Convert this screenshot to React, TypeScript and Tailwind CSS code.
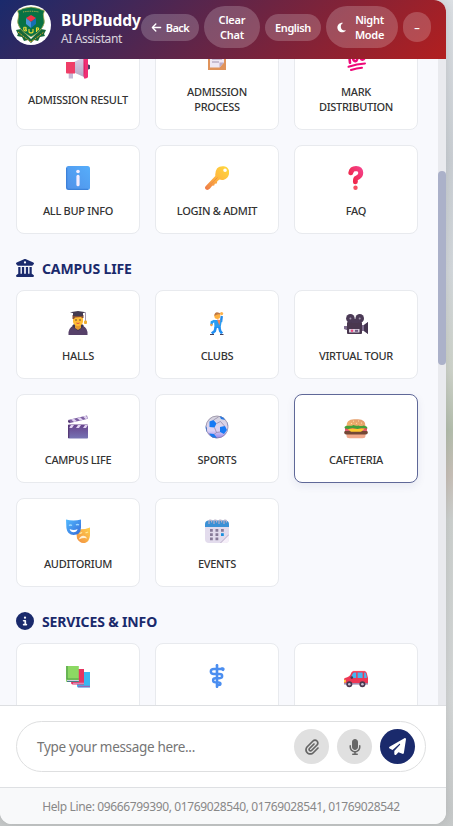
import type { ReactNode } from "react";
import {
  FaArrowLeft,
  FaBuildingColumns,
  FaCircleInfo,
  FaMicrophone,
  FaMoon,
  FaPaperclip,
  FaPaperPlane,
} from "react-icons/fa6";

function Icon({ children }: { children: ReactNode }) {
  return (
    <svg viewBox="0 0 24 24" className="h-6 w-6 shrink-0">
      {children}
    </svg>
  );
}

const Megaphone = () => (
  <Icon>
    <defs>
      <linearGradient id="mg" x1="0" x2="0" y1="0" y2="1">
        <stop offset="0" stopColor="#d9cfe6" />
        <stop offset="1" stopColor="#b5a9c6" />
      </linearGradient>
    </defs>
    <path d="M22 9.5a2.3 2.3 0 0 1 0 5z" fill="#4a3d63" />
    <rect x="2.7" y="16" width="4.3" height="7.5" fill="#c5b8d5" />
    <path d="M8 7 18 2v20L8 17.5z" fill="url(#mg)" />
    <path d="M0 7h9v11.5H1q-1 0-1-1z" fill="#ef3d67" />
    <path d="M18 1.5q4 0 4 2v18q0 2-4 2z" fill="#f02f74" />
    <path d="M17.5 2v21q2.5-10 0-21z" fill="#d91a62" />
  </Icon>
);

const Clipboard = () => (
  <Icon>
    <path d="M3 2h18v21H3z" fill="#e0935b" />
    <path d="M5 4h14v11.5L14.5 20.5H5z" fill="#eee7f4" />
    <path d="M7 9h10M7 12h10M7 15h7" stroke="#a192b0" strokeWidth="1" />
    <path d="M14.5 20.5v-5H19z" fill="#bbaac6" />
    <rect x="8" y="1" width="8" height="3" rx="1" fill="#9586a5" />
  </Icon>
);

const Hundred = () => (
  <Icon>
    <g fill="none" stroke="#ee0878" strokeLinecap="round" strokeWidth="2.6">
      <path d="M2.5 9 5 6.8l1 9" />
      <ellipse cx="11" cy="9.8" rx="2.3" ry="4.4" transform="rotate(-8 11 9.8)" />
      <ellipse cx="18.3" cy="8.2" rx="2.4" ry="4.4" transform="rotate(-8 18.3 8.2)" />
      <path d="M4.5 19.8Q13 16.8 21 16.4" strokeWidth="2" />
      <path d="M7 23Q13 20.9 18 20.7" strokeWidth="2" />
    </g>
  </Icon>
);

const InfoSquare = () => (
  <Icon>
    <defs>
      <linearGradient id="inf" x1="1" x2="0" y1="0" y2="1">
        <stop offset="0" stopColor="#56aefb" />
        <stop offset="1" stopColor="#5090e8" />
      </linearGradient>
    </defs>
    <rect width="24" height="24" rx="2.5" fill="url(#inf)" />
    <path d="M.7 2v19.2q0 2.1 2.1 2.1H22" fill="none" stroke="#397dd5" />
    <circle cx="12" cy="5.5" r="1.8" fill="#f4edff" />
    <rect x="10.4" y="8.8" width="3.2" height="11.5" rx="1.6" fill="#f4edff" />
  </Icon>
);

const KeyIcon = () => (
  <Icon>
    <defs>
      <linearGradient id="key" x1="1" x2="0" y1="0" y2="1">
        <stop offset="0" stopColor="#ffda3d" />
        <stop offset=".5" stopColor="#ffb83f" />
        <stop offset="1" stopColor="#ed7548" />
      </linearGradient>
    </defs>
    <path
      fill="url(#key)"
      fillRule="evenodd"
      d="M12 2.5C14 .4 17-.2 20 .5s4.8 4 4 7.5-3.4 6-7 6l-2.5-.4-2.2 1.7-.5 2.2-2 .3-.6 1.7-2 .3L5 22.6Q3 24.5 1 23.6q-1.8-1.5-.4-3.4L10.3 10Q9.9 5.5 12 2.5zM20 2.4a1.8 1.8 0 1 0 .1 3.6A1.8 1.8 0 0 0 20 2.4z"
    />
    <path d="m2.5 21.5 10-10" stroke="#ed9146" />
  </Icon>
);

const Question = () => (
  <Icon>
    <defs>
      <linearGradient id="qu" x1="1" x2="0" y1="0" y2="1">
        <stop offset="0" stopColor="#f43f86" />
        <stop offset="1" stopColor="#ee2440" />
      </linearGradient>
    </defs>
    <path
      d="M6.8 6.8Q7.6 2.5 12 2.5q4.6.2 4.8 4.4c.1 3.2-2.1 4.4-4.5 5.3q-1 .5-.9 3.6"
      fill="none"
      stroke="url(#qu)"
      strokeLinecap="round"
      strokeWidth="4.9"
    />
    <circle cx="11.5" cy="21.7" r="2.2" fill="#f65162" />
  </Icon>
);

const Graduate = () => (
  <Icon>
    <path d="M2.5 24q-.7-7 5.3-9.5h8.4q6 2.5 5.3 9.5z" fill="#564169" />
    <path d="m6 15 6 5 6-5-2-2H8z" fill="#40364f" />
    <path d="M9 12h6v5l-3 2-3-2z" fill="#e79b32" />
    <path d="M7 4h10v7q-1 4-5 4t-5-4z" fill="#ffbd35" />
    <path d="M6.5 4h11v3H16l-1-1-6 .5L8 8H6.5z" fill="#884f35" />
    <path d="M4 1.2 12 0l8 1.2-8 2.3zM7 2h10v3H7z" fill="#433a50" />
    <circle cx="10" cy="9" r=".8" fill="#603c31" />
    <circle cx="14" cy="9" r=".8" fill="#603c31" />
    <path d="M10.4 12q1.6 1 3.2 0" fill="none" stroke="#dc4f46" />
    <path d="M19.5 1.4v9" stroke="#a498b1" />
    <rect x="18" y="9.5" width="3" height="3.4" rx="1" fill="#efae31" />
  </Icon>
);

const Dancer = () => (
  <Icon>
    <path d="m16 11 .8-6" stroke="#248aeb" strokeWidth="2.4" />
    <circle cx="16.6" cy="2.6" r="1.6" fill="#ffb34c" />
    <path d="m9.5 10-2.7 1-.3 3" fill="none" stroke="#219cf5" strokeWidth="2.4" />
    <path d="M9 9h8l-1.5 8H9.5z" fill="#299cf1" />
    <path d="m12 8.5 3.4.5-1 5.5z" fill="#f78355" />
    <path d="m10.8 16-1 4-3 2.5M14.2 16l1 4 1.8 2.5" fill="none" stroke="#208df1" strokeWidth="2.6" />
    <path d="M5 23.5h4M15 23.5h3.5" stroke="#47435d" />
    <circle cx="12.3" cy="5" r="3" fill="#ffb13f" />
    <path d="M9.4 5q0-4 3.4-3.6 3 .5 2.3 2.1-1.8-.9-4 .5z" fill="#bd7847" />
    <circle cx="6.4" cy="14" r="1.2" fill="#f4a14e" />
  </Icon>
);

const Camera = () => (
  <Icon>
    <path d="M0 15h4v4H2.5L0 18zM17 14h3l4-3v12l-4-3h-3z" fill="#806e90" />
    <path d="m20 14 4-3v12l-4-3z" fill="#453550" />
    <rect x="3" y="11" width="15" height="12" rx="1" fill="#49374f" />
    <rect x="5" y="18" width="10.5" height="3.6" rx=".5" fill="#d9cddd" />
    <circle cx="8" cy="19.8" r="1.2" fill="#f0457e" />
    <path d="M11 19.8h3" stroke="#705a80" strokeWidth="2" />
    <circle cx="6.4" cy="7.4" r="4.3" fill="#4b3a56" />
    <circle cx="15.7" cy="7.4" r="4.3" fill="#4b3a56" />
    <path d="M8 8h6v4H8z" fill="#4b3a56" />
    <g fill="#a093ab">
      <circle cx="6.4" cy="7.4" r="1" />
      <circle cx="15.7" cy="7.4" r="1" />
    </g>
  </Icon>
);

const Clapper = () => (
  <Icon>
    <defs>
      <linearGradient id="cl" x1="0" x2="0" y1="0" y2="1">
        <stop offset="0" stopColor="#66428b" />
        <stop offset="1" stopColor="#7774b4" />
      </linearGradient>
    </defs>
    <rect x="2" y="9.5" width="20" height="14" rx=".8" fill="url(#cl)" />
    <path d="M2 5 21 .5l1 3.2-19 4.6z" fill="#7d60a1" />
    <path d="m5 4.5 3-.8 3 2.6-3 .8zM11 3l3-.8 3 2.6-3 .8zM17 1.5l3-.8 2 2.8-2.5.6zM5 10h3l-2 3H3zM12 10h3l-2 3h-3zM19 10h3l-2 3h-3z" fill="#e0d2f1" />
    <path d="M2.7 10v13" stroke="#563975" strokeWidth="1.3" />
    <circle cx="3" cy="6.5" r="1" fill="#4f3568" />
  </Icon>
);

const Soccer = () => (
  <Icon>
    <defs>
      <linearGradient id="soc" x1="0" x2="0" y1="0" y2="1">
        <stop offset="0" stopColor="#d4d4da" />
        <stop offset=".65" stopColor="#ddd3f6" />
        <stop offset="1" stopColor="#8f7ee6" />
      </linearGradient>
      <clipPath id="ball">
        <circle cx="12" cy="12" r="11.3" />
      </clipPath>
    </defs>
    <g clipPath="url(#ball)">
      <path d="M0 0h24v24H0z" fill="url(#soc)" />
      <path d="m4.5 6.5 4-1.5 3 3.5-2 4-5-.5zM15 12l5-1 2 4-3 4-4-2zM14 0l5 2 1 3-4-1zM0 10l2 3v5l-3-2zM4 18.5l5 .5 3 4-3 3zM22 5l3 4-2 2z" fill="#167af4" />
      <path d="m8.5 5 5-3m-2 6.5 4-2 4 4.5m-10 1.5 2 5-2.5 2m2.5-2 3.5-.5" fill="none" stroke="#8d82a3" strokeWidth=".7" />
    </g>
    <circle cx="12" cy="12" r="11" fill="none" stroke="#7f758f" strokeWidth=".6" />
  </Icon>
);

const Burger = () => (
  <Icon>
    <defs>
      <linearGradient id="bun" x1="0" x2="1" y1="1" y2="0">
        <stop offset="0" stopColor="#f7b76b" />
        <stop offset="1" stopColor="#df986f" />
      </linearGradient>
    </defs>
    <path d="M2.5 11.5Q2 4.5 10 4.3h4q8 .2 7.5 7.2z" fill="url(#bun)" />
    <path d="M2.5 18.5h19v2.2q0 2.5-3 2.5h-13q-3 0-3-2.5z" fill="#f0a98b" />
    <rect x=".2" y="15.6" width="23.6" height="4" rx="2" fill="#744735" />
    <path d="M1 13h22v2.8H1z" fill="#e84e65" />
    <path d="M3 13.5h18l-4 3.2H7z" fill="#ffc92e" />
    <path d="M1 13.5q-1.5-2 1.5-2.8 5.2.5 7-.7 2.5 1.3 5 .4 2.5 1.3 5 .1 4 .6 4 3l-6-.4-4 1-5-1-4 1z" fill="#449f3b" />
    <path d="M9 6.2h1m4-.2h1M7 8.5h1m4-.2h1m4-.2h1" stroke="#ffe1a7" />
  </Icon>
);

const Masks = () => (
  <Icon>
    <defs>
      <linearGradient id="blue" x1="0" x2="1" y1="0" y2="1">
        <stop stopColor="#52baff" />
        <stop offset="1" stopColor="#356bd9" />
      </linearGradient>
      <linearGradient id="gold" x1="0" x2="1" y1="1" y2="0">
        <stop stopColor="#f18c40" />
        <stop offset="1" stopColor="#ffd04c" />
      </linearGradient>
    </defs>
    <path d="M10 10q7 1.2 14-1.5v8q-.7 6.4-5 7.4-4.7.9-8-4.5z" fill="url(#gold)" />
    <path d="M0 .5q7.5 2 15 0v8q-.4 7-6 7.3Q1.5 16.6.4 9z" fill="url(#blue)" />
    <path d="M3 6.5q1.5-1 3 0m4-.5q1.5-1 3 0" fill="none" stroke="#a4dbff" strokeWidth="1.3" />
    <path d="M3.6 10q4.4 2 8 0-1 3.2-4 3.2t-4-3.2z" fill="#fff" />
    <path d="M13.5 14.5q2-.2 2.4-1.2m3.6.3q1.5.3 2.4-.8" fill="none" stroke="#ffe798" strokeWidth="1.3" />
    <path d="M12.8 20.5q1.5-3.7 4.4-3.7 2.9-.1 4 2.6-4-.9-8.4 1.1z" fill="#fff1d2" />
  </Icon>
);

const CalendarIcon = () => (
  <Icon>
    <rect y="1.5" width="24" height="22.5" rx="4" fill="#e3dced" />
    <path d="M4 1.5h16q4 0 4 4V8H0V5.5q0-4 4-4z" fill="#3b91d6" />
    <path d="m15.5 24 8.5-8.5V20q0 4-4 4z" fill="#f6eff9" />
    <path d="m15.5 24 8.5-8.5" stroke="#b6a9c4" />
    <g fill="#887b98">
      <path d="M5 10h2.8v2.8H5zM10.5 10h2.8v2.8h-2.8zM16 10h2.8v2.8H16zM5 14.2h2.8V17H5zM10.5 14.2h2.8V17h-2.8zM5 18.4h2.8v2.8H5zM10.5 18.4h2.8v2.8h-2.8z" />
      <path d="M16 14.2h2.8V17H16z" fill="#1990dd" />
    </g>
    <path d="M4 5V2Q4.5.4 6.2 1.3 7 2 6.5 3.5M9 5V2q.5-1.6 2.2-.7.8.7.3 2.2M14 5V2q.5-1.6 2.2-.7.8.7.3 2.2M19 5V2q.5-1.6 2-.7.8.7.3 2.2" stroke="#b9afc6" strokeWidth="1.2" fill="none" />
  </Icon>
);

const Books = () => (
  <Icon>
    <path d="M11 8h13v15.5H12.5q-1.5 0-1.5-1.5z" fill="#39b8f1" />
    <path d="M12 22.5h12" stroke="#9668b8" strokeWidth="1.5" />
    <path d="M6 5h12v15.5H6.5q-1.4 0-1.4-1.4z" fill="#e73461" />
    <path d="M7 19.4h11" stroke="#d786b5" strokeWidth="1.4" />
    <path d="M0 2h12.8v16H1q-1 0-1-1z" fill="#8cd863" />
    <path d="M1 2v13h11.8" fill="none" stroke="#529e4b" strokeWidth="1.2" />
    <path d="M1 16.5h11.8" stroke="#d0d0e3" />
    <path d="M1 17.5h11.8" stroke="#467b83" />
  </Icon>
);

const Medical = () => (
  <Icon>
    <g fill="none" stroke="#4b8ef0" strokeLinecap="round" strokeWidth="2.4">
      <path d="M12 1.2v21.6" strokeWidth="2.6" />
      <path d="M18 5H9Q5.8 5 5.8 7.5T9 10h5.5q2.7 0 2.7 2.1t-2.7 2.1h-4q-2.4 0-2.4 2.1t2.4 2.1h3q2 0 2 1.3T13.5 21" />
      <path d="M17 4.8q1.8-.2 1 .8" strokeWidth="2.9" />
    </g>
  </Icon>
);

const Car = () => (
  <Icon>
    <path d="M1 14q5-.6 6.4-5.4Q8 7 10 7h10.5q2 0 2.4 2.6L24 14v6H0v-4.5Q0 14.3 1 14z" fill="#ee3755" />
    <path d="M7 14q1.5-5.2 3-5.6h2.2V14zM13.6 8.4h5V14h-5zM20.2 8.4h1q1.2.6 1.6 5.6h-2.6z" fill="#42b7f2" />
    <path d="M9 7.4h12" stroke="#ff5064" strokeWidth=".8" />
    <path d="M0 19h24v1.6H0z" fill="#a48baf" />
    <path d="M0 15.7h1.8v2.8H0z" fill="#ffd548" />
    <circle cx="7.8" cy="13.6" r="1.3" fill="#413d55" />
    <g fill="#49384f">
      <circle cx="5.3" cy="20.3" r="3" />
      <circle cx="18.4" cy="20.3" r="3" />
    </g>
    <g fill="#c9c0d4">
      <circle cx="5.3" cy="20.3" r="1.3" />
      <circle cx="18.4" cy="20.3" r="1.3" />
    </g>
  </Icon>
);

function Crest() {
  return (
    <svg viewBox="0 0 40 40" className="h-10 w-10 shrink-0">
      <circle cx="20" cy="20" r="20" fill="#fff" />
      <path d="m5 25 5-1 10 10 10-10 5 1-2 4 1 2-5 1-2 4-4-1-3 3-3-3-4 1-2-4-5-1 1-2z" fill="#176838" />
      <path d="m7 27 5 4 4 3 4 3 4-3 4-3 5-4" fill="none" stroke="#d4a72b" strokeDasharray="2 1" />
      <path d="M6.5 5.5Q10 5 12 3.5q8-3 16 0 2 1.5 5.5 2-2 4-.7 7.5 1.8 5-1.8 10-3 5-11 9-8-4-11-9-3.6-5-1.8-10 1.3-3.5-.7-7.5z" fill="#087244" stroke="#bbb052" strokeWidth=".7" />
      <path d="M12 7q8-1.5 16 0" stroke="#d3b54a" fill="none" strokeDasharray="1 .8" />
      <path d="m15 13 5-3 5 3-5 4z" fill="#f03447" />
      <path d="m15 13 5 4v6l-5-4z" fill="#4995d6" />
      <path d="m25 13-5 4v6l5-4z" fill="#156fb4" />
      <path d="M13 22q-1 4 1.5 4 2 0 0-2 2-1.5-1-2M18 24v3q2 2 4 0v-3M25.5 27v-4q3-.5 2 1.5l-2 1" fill="none" stroke="#efdb35" strokeWidth="1.1" />
    </svg>
  );
}

function Card({ icon, label, active = false }: { icon: ReactNode; label: string; active?: boolean }) {
  return (
    <div
      className={`flex flex-col items-center justify-center gap-[13px] rounded-[8px] border bg-white pt-5 pb-[15px] ${
        active ? "border-[#5f6898] shadow-[0_3px_8px_rgba(26,42,108,0.08)]" : "border-[#e8eaee]"
      }`}
    >
      {icon}
      <div className="whitespace-pre-line text-center text-[11px] font-medium leading-[15px] tracking-[-0.28px] text-[#333]">{label}</div>
    </div>
  );
}

function Section({ icon, title }: { icon: ReactNode; title: string }) {
  return (
    <h2 className="mt-6 mb-3 flex h-5 items-center gap-2 text-[14px] font-bold tracking-[-0.14px] text-[#1a2a6c]">
      {icon}
      {title}
    </h2>
  );
}

const pill = "flex shrink-0 items-center justify-center rounded-full bg-white/20 text-center text-[11px] font-semibold leading-[15px]";

export default function App() {
  return (
    <div className="h-[826px] w-[453px] overflow-hidden bg-[linear-gradient(180deg,#dce0e4_0px,#cbd0d5_160px,#d4d9dd_270px,#cfd4cb_370px,#b5bfae_430px,#c8c0b8_475px,#cdd1cf_520px,#d5d8d8_700px,#c6c9c9_826px)] font-['Noto_Sans','Open_Sans',sans-serif]">
      <div className="flex h-[824px] w-[446px] flex-col overflow-hidden rounded-tr-[12px] rounded-b-[12px] bg-white shadow-[0_0_12px_rgba(0,0,0,0.12)]">
        <header className="flex h-[59px] shrink-0 items-start bg-[linear-gradient(135deg,#1a2a6c,#b21f1f)] pl-[11px] text-white">
          <div className="pt-[5px]"><Crest /></div>
          <div className="ml-2.5 w-20 shrink-0 whitespace-nowrap pt-[10px]">
            <div className="text-[15.5px] font-bold leading-5 tracking-[-0.1px]">BUPBuddy</div>
            <div className="text-[12px] leading-[18px] tracking-[-0.4px] text-white/80">AI Assistant</div>
          </div>
          <div className="flex h-[54px] items-center gap-[5px]">
            <div className={`${pill} h-[27px] w-[58px] gap-1 tracking-[-0.5px]`}><FaArrowLeft className="h-[11px] w-[11px]" />Back</div>
            <div className={`${pill} h-[42px] w-14 tracking-[-0.2px]`}>Clear<br />Chat</div>
            <div className={`${pill} h-[27px] w-14 tracking-[-0.4px]`}>English</div>
            <div className={`${pill} h-[42px] w-[72px] gap-2 pr-2 tracking-[-0.3px]`}><FaMoon className="ml-1 h-[11px] w-[11px]" /><span>Night<br />Mode</span></div>
            <div className={`${pill} h-[30px] w-7`}>–</div>
          </div>
        </header>
        <div className="flex h-[646px] shrink-0 overflow-hidden bg-[#f8f9fd]">
          <main className="-mt-[33px] w-[438px] px-4">
            <div className="grid grid-cols-[124px_124px_124px] gap-[15px]">
              <Card icon={<Megaphone />} label="ADMISSION RESULT" />
              <Card icon={<Clipboard />} label={"ADMISSION\nPROCESS"} />
              <Card icon={<Hundred />} label={"MARK\nDISTRIBUTION"} />
              <Card icon={<InfoSquare />} label="ALL BUP INFO" />
              <Card icon={<KeyIcon />} label="LOGIN & ADMIT" />
              <Card icon={<Question />} label="FAQ" />
            </div>
            <Section icon={<FaBuildingColumns className="h-[18px] w-[18px]" />} title="CAMPUS LIFE" />
            <div className="grid grid-cols-[124px_124px_124px] gap-[15px]">
              <Card icon={<Graduate />} label="HALLS" />
              <Card icon={<Dancer />} label="CLUBS" />
              <Card icon={<Camera />} label="VIRTUAL TOUR" />
              <Card icon={<Clapper />} label="CAMPUS LIFE" />
              <Card icon={<Soccer />} label="SPORTS" />
              <Card icon={<Burger />} label="CAFETERIA" active />
              <Card icon={<Masks />} label="AUDITORIUM" />
              <Card icon={<CalendarIcon />} label="EVENTS" />
            </div>
            <Section icon={<FaCircleInfo className="h-[18px] w-[18px]" />} title="SERVICES & INFO" />
            <div className="grid grid-cols-[124px_124px_124px] gap-[15px]">
              <Card icon={<Books />} label="" />
              <Card icon={<Medical />} label="" />
              <Card icon={<Car />} label="" />
            </div>
            <div className="h-10" />
          </main>
          <div className="w-2 shrink-0 bg-[#e9eaee] pt-28">
            <div className="h-[194px] rounded bg-[#abb1c9]" />
          </div>
        </div>
        <div className="h-[82px] shrink-0 border-t border-[#dddfe2] px-4 pt-[15px]">
          <div className="flex h-[51px] w-[410px] items-center rounded-full border border-[#dedfe0] pl-5 pr-2.5">
            <span className="flex-1 pt-0.5 text-[13.5px] tracking-[-0.32px] text-[#757575]">Type your message here...</span>
            <div className="flex gap-2">
              <button className="flex h-[35px] w-[35px] items-center justify-center rounded-full bg-[#e0e0e0] text-[#666]"><FaPaperclip className="h-4 w-4" /></button>
              <button className="flex h-[35px] w-[35px] items-center justify-center rounded-full bg-[#e0e0e0] text-[#666]"><FaMicrophone className="h-4 w-4" /></button>
              <button className="flex h-[35px] w-[35px] items-center justify-center rounded-full bg-[#1a2a6c] text-white"><FaPaperPlane className="h-[17px] w-[17px]" /></button>
            </div>
          </div>
        </div>
        <footer className="flex h-[37px] shrink-0 items-center justify-center border-t border-[#dee0e3] bg-[#f8f9fa] pr-1 pt-0.5 text-[12px] tracking-[-0.37px] text-[#888]">
          Help Line: 09666799390, 01769028540, 01769028541, 01769028542
        </footer>
      </div>
    </div>
  );
}
